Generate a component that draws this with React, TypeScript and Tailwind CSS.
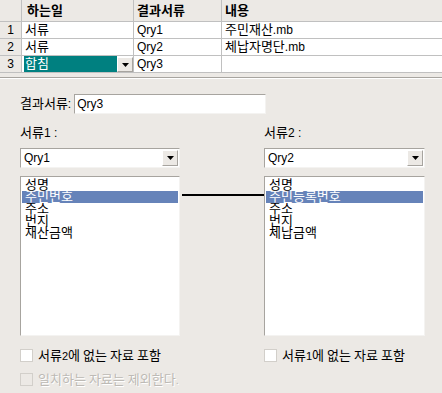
import React from "react";

const HANGUL = /([\uAC00-\uD7A3]+)/;

const T = ({ s }: { s: string }) => (
  <>
    {s.split(HANGUL).map((p, i) =>
      HANGUL.test(p) ? (
        <span key={i} className="text-[13px]">
          {p}
        </span>
      ) : (
        <React.Fragment key={i}>{p}</React.Fragment>
      )
    )}
  </>
);

const Arrow = () => (
  <svg width="7" height="4" viewBox="0 0 7 4">
    <path d="M0 0H7L3.5 4Z" fill="#000" />
  </svg>
);

const DropBtn = () => (
  <div className="w-[16px] h-full flex items-center justify-center bg-[#ece9e5] border-t border-l border-t-white border-l-white border-b border-r border-b-[#a7a49f] border-r-[#a7a49f]">
    <Arrow />
  </div>
);

const Combo = ({ value }: { value: string }) => (
  <div className="h-[20px] flex bg-white border-t border-l border-[#a7a49f] border-b border-r border-b-[#f4f3f1] border-r-[#f4f3f1] p-[1px]">
    <div className="flex-1 pl-[2px] leading-[17px]">{value}</div>
    <DropBtn />
  </div>
);

const ListBox = ({ items, sel }: { items: string[]; sel: number }) => (
  <div className="h-[160px] bg-white border-t border-l border-[#a7a49f] border-b border-r border-b-[#f4f3f1] border-r-[#f4f3f1] pt-[2px] px-[1px]">
    {items.map((it, i) => (
      <div
        key={it}
        className={
          "h-[12px] leading-[12px] pl-[3px] whitespace-nowrap " +
          (i === sel ? "bg-[#6683b9] text-white" : "text-black")
        }
      >
        <T s={it} />
      </div>
    ))}
  </div>
);

const Check = ({ label, disabled }: { label: string; disabled?: boolean }) => (
  <div className="flex items-center h-[13px] gap-[5px]">
    <div
      className={
        "w-[13px] h-[13px] border border-[#d2cfca] shrink-0 " +
        (disabled ? "bg-[#ece9e5]" : "bg-white")
      }
    />
    <span
      className={
        "leading-[13px] whitespace-nowrap " +
        (disabled ? "text-[#bdbab5] [text-shadow:1px_1px_0_#ffffff]" : "text-black")
      }
    >
      <T s={label} />
    </span>
  </div>
);

export default function App() {
  const cell = "border-r border-b border-[#c0c0c0] whitespace-nowrap overflow-hidden";
  const rows = [
    { n: "1", a: "서류", b: "Qry1", c: "주민재산.mb" },
    { n: "2", a: "서류", b: "Qry2", c: "체납자명단.mb" },
  ];
  return (
    <div className="w-[442px] h-[393px] bg-[#ece9e5] text-[11px] text-black font-['Liberation_Sans','Noto_Sans_CJK_KR',sans-serif] overflow-hidden flex flex-col">
      {/* grid */}
      <div className="flex flex-col bg-white">
        <div className="flex h-[22px] bg-[#ece9e5] font-bold leading-[21px]">
          <div className={cell + " w-[22px]"} />
          <div className={cell + " w-[112px] pl-[5px]"}>
            <T s="하는일" />
          </div>
          <div className={cell + " w-[88px] pl-[3px]"}>
            <T s="결과서류" />
          </div>
          <div className={cell + " flex-1 pl-[3px] border-r-0"}>
            <T s="내용" />
          </div>
        </div>
        {rows.map((r) => (
          <div key={r.n} className="flex h-[17px] leading-[16px]">
            <div className={cell + " w-[22px] bg-[#ece9e5] text-center text-[12px]"}>{r.n}</div>
            <div className={cell + " w-[112px] pl-[3px]"}>
              <T s={r.a} />
            </div>
            <div className={cell + " w-[88px] pl-[3px] text-[12px]"}>{r.b}</div>
            <div className={cell + " flex-1 pl-[3px] border-r-0 text-[12px]"}>
              <T s={r.c} />
            </div>
          </div>
        ))}
        <div className="flex h-[17px] leading-[16px]">
          <div className={cell + " w-[22px] bg-[#ece9e5] text-center text-[12px]"}>3</div>
          <div className={cell + " w-[112px] pl-[2px] flex"}>
            <div className="flex-1 bg-[#008080] text-white pl-[1px]">
              <T s="합침" />
            </div>
            <div className="h-[15px] mt-[1px]">
              <DropBtn />
            </div>
          </div>
          <div className={cell + " w-[88px] pl-[3px] text-[12px]"}>Qry3</div>
          <div className={cell + " flex-1 pl-[3px] border-r-0"} />
        </div>
      </div>

      {/* splitter */}
      <div className="h-[4px]" />
      <div className="h-[1px] bg-[#a7a49f]" />
      <div className="h-[1px] bg-white" />

      {/* panel */}
      <div className="flex flex-col pl-[20px] pt-[15px]">
        <div className="flex items-center h-[20px] gap-[3px]">
          <span className="leading-[20px] text-[12px]">
            <T s="결과서류:" />
          </span>
          <div className="w-[192px] h-[20px] bg-white border-t border-l border-[#a7a49f] border-b border-r border-b-[#f4f3f1] border-r-[#f4f3f1] pl-[2px] leading-[18px] text-[12px]">
            Qry3
          </div>
        </div>

        <div className="flex mt-[12px]">
          <div className="w-[160px] flex flex-col">
            <div className="h-[14px] leading-[14px] text-[12px]">
              <T s="서류1 :" />
            </div>
            <div className="mt-[8px] text-[12px]">
              <Combo value="Qry1" />
            </div>
            <div className="mt-[8px]">
              <ListBox items={["성명", "주민번호", "주소", "번지", "재산금액"]} sel={1} />
            </div>
            <div className="mt-[13px]">
              <Check label="서류2에 없는 자료 포함" />
            </div>
            <div className="mt-[11px]">
              <Check label="일치하는 자료는 제외한다." disabled />
            </div>
          </div>
          <div className="w-[84px] pl-[2px]">
            <div className="mt-[68px] h-[2px] bg-black" />
          </div>
          <div className="w-[161px] flex flex-col">
            <div className="h-[14px] leading-[14px] text-[12px]">
              <T s="서류2 :" />
            </div>
            <div className="mt-[8px] text-[12px]">
              <Combo value="Qry2" />
            </div>
            <div className="mt-[8px]">
              <ListBox items={["성명", "주민등록번호", "주소", "번지", "체납금액"]} sel={1} />
            </div>
            <div className="mt-[13px]">
              <Check label="서류1에 없는 자료 포함" />
            </div>
          </div>
        </div>
      </div>
    </div>
  );
}
